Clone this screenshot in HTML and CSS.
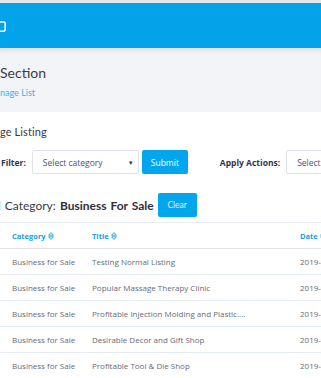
FILE: index.html
```html
<!DOCTYPE html>
<html lang="en">
  <head>
    <meta charset="UTF-8" />
    <meta name="viewport" content="width=device-width, initial-scale=1.0" />
    <title>Manage Listing</title>
    <link rel="stylesheet" href="styles.css">
  </head>
  <body>
    <div class="topbar"></div>

    <header class="navbar">
      <svg class="logo-end" width="7" height="12" viewBox="0 0 7 12">
        <path d="M0 1 H3.6 Q5.2 1 5.2 2.6 V8.6 Q5.2 10.2 3.6 10.2 H0" fill="none" stroke="#fff" stroke-width="1.6" />
      </svg>
    </header>

    <section class="page-head">
      <h1><span class="cut">Listing </span>Section</h1>
      <p class="crumb"><span class="cut">Ma</span>nage List</p>
    </section>

    <main class="content">
      <h2><span class="cut">Mana</span>ge Listing</h2>

      <div class="filters">
        <label class="label">Filter:</label>
        <div class="select category-select">
          <span>Select category</span>
          <span class="caret">▾</span>
        </div>
        <button class="btn">Submit</button>
        <label class="label actions-label">Apply Actions:</label>
        <div class="select action-select">
          <span>Select action</span>
        </div>
      </div>

      <div class="selected">
        <span class="selected-text"><span class="cut">Selecte</span>d Category: <b>Business For Sale</b></span>
        <button class="btn btn-clear">Clear</button>
      </div>

      <table class="listing">
        <thead>
          <tr>
            <th class="col-cat">Category <svg class="sort" width="6" height="8" viewBox="0 0 6 8"><path d="M3 0.6 L5.4 3.2 H0.6 Z M3 7.4 L5.4 4.8 H0.6 Z" fill="none" stroke="#18a0e6" stroke-width="0.9" /></svg></th>
            <th class="col-title">Title <svg class="sort" width="6" height="8" viewBox="0 0 6 8"><path d="M3 0.6 L5.4 3.2 H0.6 Z M3 7.4 L5.4 4.8 H0.6 Z" fill="none" stroke="#18a0e6" stroke-width="0.9" /></svg></th>
            <th class="col-date">Date <svg class="sort" width="6" height="8" viewBox="0 0 6 8"><path d="M3 0.6 L5.4 3.2 H0.6 Z M3 7.4 L5.4 4.8 H0.6 Z" fill="none" stroke="#18a0e6" stroke-width="0.9" /></svg></th>
          </tr>
        </thead>
        <tbody>
          <tr>
            <td>Business for Sale</td>
            <td>Testing Normal Listing</td>
            <td>2019-05-14</td>
          </tr>
          <tr>
            <td>Business for Sale</td>
            <td>Popular Massage Therapy Clinic</td>
            <td>2019-05-10</td>
          </tr>
          <tr>
            <td>Business for Sale</td>
            <td>Profitable Injection Molding and Plastic....</td>
            <td>2019-05-08</td>
          </tr>
          <tr>
            <td>Business for Sale</td>
            <td>Desirable Decor and Gift Shop</td>
            <td>2019-05-06</td>
          </tr>
          <tr>
            <td>Business for Sale</td>
            <td>Profitable Tool &amp; Die Shop</td>
            <td>2019-05-02</td>
          </tr>
        </tbody>
      </table>
    </main>
  </body>
</html>
```

FILE: styles.css
```css
body {
  margin: 0;
  width: 321px;
  overflow: hidden;
  background: #fff;
  font-family: "Open Sans", sans-serif;
  color: #333;
}
/* texto que queda fuera de pantalla a la izquierda */
.cut {
  display: inline-flex;
  width: 0;
  justify-content: flex-end;
  white-space: pre;
}
.topbar {
  height: 3px;
  background: #e7e7eb;
}
.navbar {
  height: 45px;
  background: #02a3e9;
  padding-top: 18px;
  box-sizing: border-box;
}
.logo-end {
  display: block;
  margin-left: 0;
}
.page-head {
  height: 64px;
  background: #f3f4f8;
  box-shadow: inset 0 7px 6px -5px rgba(0, 0, 0, 0.1);
  padding-top: 16px;
  box-sizing: border-box;
}
.page-head h1 {
  margin: 0;
  font-family: Lato, sans-serif;
  font-weight: 400;
  font-size: 14px;
  line-height: 18px;
  letter-spacing: 0;
  color: #3b3b46;
}
.crumb {
  margin: 5px 0 0;
  font-family: Lato, sans-serif;
  font-size: 9px;
  line-height: 11px;
  color: #3db3ea;
}
.content {
  padding-top: 13px;
}
.content h2 {
  margin: 0;
  font-family: Lato, sans-serif;
  font-weight: 400;
  font-size: 11px;
  line-height: 14px;
  letter-spacing: 0.1px;
  color: #3a3a44;
}
.filters {
  display: flex;
  align-items: center;
  margin-top: 11px;
  height: 24px;
  white-space: nowrap;
}
.filters > * {
  flex-shrink: 0;
}
.label {
  font-size: 8.5px;
  font-weight: 700;
  color: #2f3550;
  padding-left: 1px;
}
.select {
  height: 24px;
  box-sizing: border-box;
  border: 1px solid #dfe2ea;
  border-radius: 2px;
  background: #fff;
  display: flex;
  align-items: center;
  padding-left: 10px;
  font-size: 8.5px;
  color: #4b5174;
}
.category-select {
  width: 107px;
  margin-left: 6px;
  justify-content: space-between;
  padding-right: 5px;
}
.caret {
  font-size: 7px;
  color: #333;
}
.btn {
  height: 24px;
  border: 0;
  border-radius: 2px;
  background: #03a6ec;
  color: #fff;
  font-family: "Open Sans", sans-serif;
  font-size: 8.5px;
  padding: 0;
}
.filters .btn {
  margin-left: 3px;
  width: 46px;
}
.actions-label {
  margin-left: 31px;
}
.action-select {
  width: 80px;
  margin-left: 6px;
}
.selected {
  display: flex;
  align-items: center;
  margin-top: 19px;
  height: 24px;
  white-space: nowrap;
}
.selected-text {
  margin-left: -6px;
  font-family: Lato, sans-serif;
  font-size: 12px;
  word-spacing: 1px;
  color: #3a3a44;
}
.selected-text b {
  color: #2f2f38;
}
.btn-clear {
  margin-left: 4px;
  width: 39px;
  font-family: Lato, sans-serif;
  color: #dff3fc;
}
.listing {
  margin-top: 5px;
  width: 420px;
  border-collapse: collapse;
  table-layout: fixed;
  border-top: 1px solid #e8edf2;
}
.listing th {
  text-align: left;
  font-size: 7.5px;
  font-weight: 700;
  color: #18a0e6;
  height: 25px;
  padding: 0;
  border-bottom: 1px solid #dfe3e8;
  white-space: nowrap;
}
.listing td {
  font-size: 8px;
  color: #666a78;
  height: 25px;
  padding: 0;
  border-bottom: 1px solid #e4ecf4;
  white-space: nowrap;
}
.listing th:first-child,
.listing td:first-child {
  padding-left: 12px;
}
.col-cat {
  width: 80px;
}
.col-title {
  width: 208px;
}
.sort {
  vertical-align: -1px;
}
```
